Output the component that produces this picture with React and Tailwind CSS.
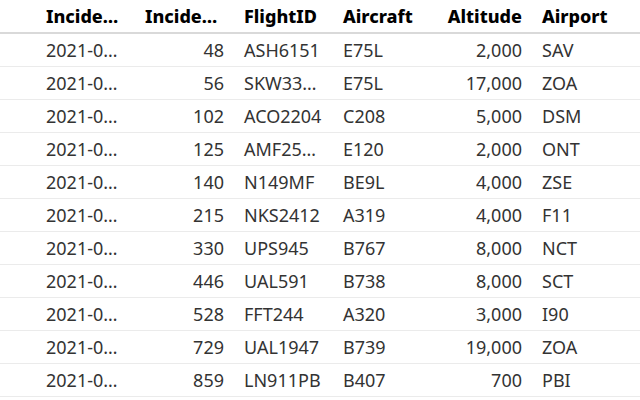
import React from 'react'

const rows = [
  ['2021-01-02', 48, 'ASH6151', 'E75L', '2,000', 'SAV'],
  ['2021-01-02', 56, 'SKW3312W', 'E75L', '17,000', 'ZOA'],
  ['2021-01-03', 102, 'ACO2204', 'C208', '5,000', 'DSM'],
  ['2021-01-03', 125, 'AMF2581M', 'E120', '2,000', 'ONT'],
  ['2021-01-04', 140, 'N149MF', 'BE9L', '4,000', 'ZSE'],
  ['2021-01-05', 215, 'NKS2412', 'A319', '4,000', 'F11'],
  ['2021-01-07', 330, 'UPS945', 'B767', '8,000', 'NCT'],
  ['2021-01-09', 446, 'UAL591', 'B738', '8,000', 'SCT'],
  ['2021-01-10', 528, 'FFT244', 'A320', '3,000', 'I90'],
  ['2021-01-13', 729, 'UAL1947', 'B739', '19,000', 'ZOA'],
  ['2021-01-15', 859, 'LN911PB', 'B407', '700', 'PBI'],
]

const cols = 'grid grid-cols-[99px_99px_99px_100px_99px_1fr] pl-[36px]'

export default function App() {
  return (
    <div className="w-[640px] h-[400px] overflow-hidden bg-white font-['Noto_Sans',sans-serif] text-[18px] leading-6">
      <div className={`${cols} border-b-2 border-[#d9d9d9] text-black font-extrabold`}>
        <div className="px-2.5 py-1 truncate">IncidentDate</div>
        <div className="px-2.5 py-1 truncate text-right">IncidentNumber</div>
        <div className="px-2.5 py-1 truncate">FlightID</div>
        <div className="px-2.5 py-1 truncate">Aircraft</div>
        <div className="px-2.5 py-1 truncate text-right">Altitude</div>
        <div className="px-2.5 py-1 truncate">Airport</div>
      </div>
      {rows.map((r, i) => (
        <div key={i} className={`${cols} border-b border-[#ebebeb] text-[#333333]`}>
          <div className="px-2.5 py-1 truncate">{r[0]}</div>
          <div className="px-2.5 py-1 truncate text-right">{r[1]}</div>
          <div className="px-2.5 py-1 truncate">{r[2]}</div>
          <div className="px-2.5 py-1 truncate">{r[3]}</div>
          <div className="px-2.5 py-1 truncate text-right">{r[4]}</div>
          <div className="px-2.5 py-1 truncate">{r[5]}</div>
        </div>
      ))}
    </div>
  )
}
